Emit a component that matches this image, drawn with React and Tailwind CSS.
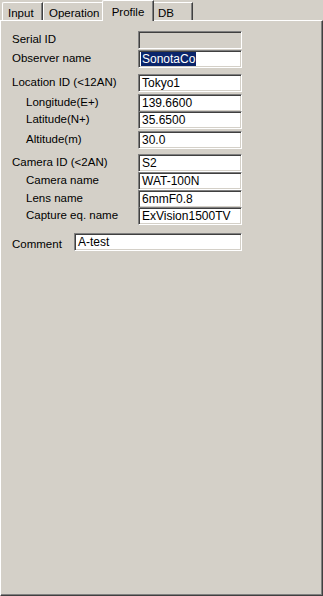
import React from 'react';

const font = { fontFamily: '"Liberation Sans", Arial, sans-serif' };

function Tab({ label, active, w }) {
  if (active) {
    return (
      <div
        className={`relative z-10 -mx-[2px] -mb-[1px] flex h-[21px] items-start justify-center rounded-tl-[2px] border-l border-t border-white bg-[#d4d0c8] pt-[3px] text-[11.5px] text-black shadow-[inset_-1px_0_0_#808080] ${w}`}
        style={{ borderRight: '1px solid #404040' }}
      >
        {label}
      </div>
    );
  }
  return (
    <div
      className={`flex h-[18px] items-start rounded-tl-[2px] border-l border-t border-white bg-[#d4d0c8] pl-[5px] pt-[2px] text-[11.5px] text-black shadow-[inset_-1px_0_0_#808080] ${w}`}
      style={{ borderRight: '1px solid #404040' }}
    >
      {label}
    </div>
  );
}

function Box({ value, disabled, selected, w = 'w-[104px]' }) {
  return (
    <div
      className={`flex h-[18px] items-center border border-t-[#808080] border-l-[#808080] border-b-white border-r-white pl-[2px] text-[12px] leading-none text-black shadow-[inset_1px_1px_0_#404040,inset_-1px_-1px_0_#d4d0c8] ${w} ${
        disabled ? 'bg-[#d4d0c8]' : 'bg-white'
      }`}
    >
      {selected ? (
        <span className="bg-[#0a246a] px-[1px] py-[1px] text-white">{value}</span>
      ) : (
        <span className="pl-[1px]">{value}</span>
      )}
    </div>
  );
}

function Row({ label, indent, value, disabled, selected, mt = 'mt-0' }) {
  return (
    <div className={`flex items-start ${mt}`}>
      <div className={`w-[137px] pt-[1px] text-[11.5px] leading-[14px] text-black ${indent ? 'pl-[25px]' : 'pl-[11px]'}`}>
        {label}
      </div>
      <Box value={value} disabled={disabled} selected={selected} />
    </div>
  );
}

export default function App() {
  return (
    <div className="flex h-[596px] w-[323px] flex-col bg-[#d4d0c8]" style={font}>
      <div className="flex h-[20px] items-end pl-[2px]">
        <Tab label="Input" w="w-[41px]" />
        <Tab label="Operation" w="w-[61px]" />
        <Tab label="Profile" active w="w-[52px]" />
        <Tab label="DB" w="w-[41px]" />
      </div>
      <div
        className="flex flex-1 flex-col border-l border-t border-white pt-[10px] shadow-[inset_-1px_-1px_0_#808080]"
        style={{ borderRight: '1px solid #404040', borderBottom: '1px solid #404040' }}
      >
        <Row label="Serial ID" value="" disabled />
        <Row label="Observer name" value="SonotaCo" selected mt="mt-[1px]" />
        <Row label="Location ID (<12AN)" value="Tokyo1" mt="mt-[6px]" />
        <Row label="Longitude(E+)" indent value="139.6600" mt="mt-[2px]" />
        <Row label="Latitude(N+)" indent value="35.6500" mt="mt-[-1px]" />
        <Row label="Altitude(m)" indent value="30.0" mt="mt-[2px]" />
        <Row label="Camera ID (<2AN)" value="S2" mt="mt-[5px]" />
        <Row label="Camera name" indent value="WAT-100N" mt="mt-[0px]" />
        <Row label="Lens name" indent value="6mmF0.8" mt="mt-[0px]" />
        <Row label="Capture eq. name" indent value="ExVision1500TV" mt="mt-[-1px]" />
        <div className="mt-[8px] flex items-end">
          <div className="w-[73px] pl-[11px] text-[11.5px] leading-[14px] text-black">Comment</div>
          <Box value="A-test" w="w-[168px]" />
        </div>
      </div>
    </div>
  );
}
